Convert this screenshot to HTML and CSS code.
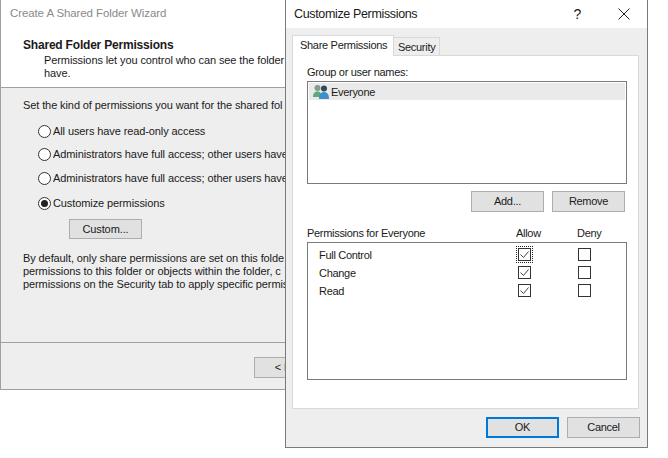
FILE: index.html
```html
<!doctype html>
<html>
<head>
  <title>Customize Permissions</title>
  <link rel="stylesheet" href="styles.css">
</head>
<body>
  <!-- Wizard window behind -->
  <div class="window wizard">
    <div class="wizard-head">
      <div class="wizard-title">Create A Shared Folder Wizard</div>
      <div class="wizard-heading">Shared Folder Permissions</div>
      <div class="wizard-sub">Permissions let you control who can see the folder<br>have.</div>
    </div>
    <div class="wizard-body">
      <p class="lead">Set the kind of permissions you want for the shared fol</p>
      <div class="radios">
        <label class="radio-row"><span class="radio"></span>All users have read-only access</label>
        <label class="radio-row"><span class="radio"></span>Administrators have full access; other users have</label>
        <label class="radio-row"><span class="radio"></span>Administrators have full access; other users have</label>
        <label class="radio-row"><span class="radio on"></span>Customize permissions</label>
      </div>
      <button class="btn custom-btn">Custom...</button>
      <p class="note">By default, only share permissions are set on this folde<br>permissions to this folder or objects within the folder, c<br>permissions on the Security tab to apply specific permis</p>
    </div>
    <div class="wizard-foot">
      <button class="btn back-btn">&lt; Back</button>
    </div>
  </div>

  <!-- Dialog in front -->
  <div class="window dialog">
    <div class="dialog-title">
      <span class="dialog-name">Customize Permissions</span>
      <span class="help">?</span>
      <svg class="close" width="12" height="12" viewBox="0 0 12 12"><path d="M.5.5l11 11M11.5.5l-11 11" stroke="#222" fill="none"/></svg>
    </div>
    <div class="dialog-body">
      <div class="tabs">
        <div class="tab active">Share Permissions</div>
        <div class="tab">Security</div>
      </div>
      <div class="panel">
        <div class="panel-label">Group or user names:</div>
        <div class="listbox">
          <div class="list-item">
            <svg class="users" width="16" height="16" viewBox="0 0 16 16">
              <circle cx="4.500" cy="4" r="3" fill="#7f9c8c"/>
              <path d="M0 13c0-4 2-5.500 4.500-5.500s4 1.500 4 5.500z" fill="#5fa877"/>
              <circle cx="11" cy="4.500" r="3" fill="#2f4a5c"/>
              <path d="M6 15c0-5 2-7 5-7s5 2 5 7z" fill="#3f8fce"/>
            </svg>
            <span class="list-text">Everyone</span>
          </div>
        </div>
        <div class="list-actions">
          <button class="btn">Add...</button>
          <button class="btn">Remove</button>
        </div>
        <div class="perm-head">
          <span class="perm-name">Permissions for Everyone</span>
          <span class="perm-col">Allow</span>
          <span class="perm-col">Deny</span>
        </div>
        <div class="perm-box">
          <div class="perm-row">
            <span class="perm-name">Full Control</span>
            <span class="perm-col"><span class="check on focus"><svg width="11" height="11" viewBox="0 0 11 11"><path d="M1.500 5.500l3 3 5-6" stroke="#444" fill="none"/></svg></span></span>
            <span class="perm-col"><span class="check"></span></span>
          </div>
          <div class="perm-row">
            <span class="perm-name">Change</span>
            <span class="perm-col"><span class="check on"><svg width="11" height="11" viewBox="0 0 11 11"><path d="M1.500 5.500l3 3 5-6" stroke="#444" fill="none"/></svg></span></span>
            <span class="perm-col"><span class="check"></span></span>
          </div>
          <div class="perm-row">
            <span class="perm-name">Read</span>
            <span class="perm-col"><span class="check on"><svg width="11" height="11" viewBox="0 0 11 11"><path d="M1.500 5.500l3 3 5-6" stroke="#444" fill="none"/></svg></span></span>
            <span class="perm-col"><span class="check"></span></span>
          </div>
        </div>
      </div>
      <div class="dialog-actions">
        <button class="btn default">OK</button>
        <button class="btn">Cancel</button>
      </div>
    </div>
  </div>
</body>
</html>
```
FILE: styles.css
```css
html, body {
  margin: 0;
  padding: 0;
}
body {
  position: relative;
  width: 668px;
  height: 458px;
  overflow: hidden;
  background-color: #fff;
  color: #1a1a1a;
  font-family: "Liberation Sans", Arial, sans-serif;
  font-size: 11px;
  line-height: 13px;
}
p {
  margin: 0;
}

.window {
  position: absolute;
  top: 0;
  box-sizing: border-box;
  border: 1px solid #8c8c8c;
  border-top: none;
  background-color: #eee;
}

.btn {
  box-sizing: border-box;
  width: 73px;
  height: 21px;
  padding: 0;
  border: 1px solid #adadad;
  border-radius: 0;
  background-color: #e1e1e1;
  color: #1a1a1a;
  font: inherit;
  letter-spacing: inherit;
}

/* wizard */
.wizard {
  left: 0;
  width: 286px;
  height: 390px;
  display: flex;
  flex-direction: column;
  overflow: hidden;
  border-color: #a0a0a0;
  white-space: nowrap;
  letter-spacing: -0.1px;
}
.wizard-head {
  flex: none;
  height: 88px;
  padding-left: 22px;
  box-sizing: border-box;
  border-bottom: 1px solid #a0a0a0;
  background-color: #fff;
}
.wizard-title {
  margin-left: -13px;
  padding-top: 7px;
  color: #8a8a8a;
  font-size: 11.5px;
}
.wizard-heading {
  margin-top: 19px;
  font-size: 12px;
  font-weight: bold;
  letter-spacing: -0.2px;
}
.wizard-sub {
  padding-left: 21px;
  margin-top: 2px;
}
.wizard-body {
  flex: none;
  height: 254px;
  box-sizing: border-box;
  padding: 11px 0 0 22px;
}
.radios {
  margin-top: 13px;
  padding-left: 15px;
  display: flex;
  flex-direction: column;
  gap: 11px;
}
.radio-row {
  display: flex;
  align-items: center;
  gap: 2px;
  height: 13px;
}
.radio-row:nth-child(2) {
  margin-top: -1px;
}
.radio-row:nth-child(4) {
  margin-top: 1px;
}
.radio {
  flex: none;
  box-sizing: border-box;
  width: 13px;
  height: 13px;
  border: 1px solid #333;
  border-radius: 50%;
  background-color: #fff;
  display: flex;
  align-items: center;
  justify-content: center;
}
.radio.on::after {
  content: "";
  width: 7px;
  height: 7px;
  border-radius: 50%;
  background-color: #222;
}
.custom-btn {
  display: block;
  height: 20px;
  margin: 9px 0 0 46px;
}
.note {
  margin-top: 13px;
}
.wizard-foot {
  flex: 1;
  border-top: 1px solid #a0a0a0;
  padding: 14px 0 0 253px;
}
.back-btn {
  padding-left: 2px;
}

/* dialog */
.dialog {
  left: 285px;
  width: 363px;
  height: 448px;
  border-color: #7a7a7a;
  letter-spacing: -0.3px;
}
.dialog-title {
  height: 28px;
  display: flex;
  align-items: center;
  background-color: #fff;
  padding: 0 17px 0 8px;
}
.dialog-name {
  flex: 1;
  font-size: 12.5px;
  letter-spacing: -0.35px;
}
.help {
  margin-right: 37px;
  font-size: 14px;
}
.dialog-body {
  padding: 7px 8px 0 6px;
}
.tabs {
  display: flex;
  align-items: flex-end;
  height: 20px;
  position: relative;
  z-index: 1;
  white-space: nowrap;
}
.tab {
  box-sizing: border-box;
  width: 46px;
  height: 18px;
  padding: 3px 0 0 4px;
  border: 1px solid #d9d9d9;
  border-bottom: none;
  border-left: none;
}
.tab.active {
  width: 102px;
  height: 21px;
  margin-bottom: -1px;
  padding: 3px 0 0 7px;
  background-color: #fff;
  border-left: 1px solid #d9d9d9;
}
.panel {
  box-sizing: border-box;
  width: 347px;
  height: 354px;
  padding: 10px 12px 0 14px;
  border: 1px solid #d9d9d9;
  background-color: #fff;
}
.panel-label {
  height: 15px;
}
.listbox {
  box-sizing: border-box;
  width: 320px;
  height: 103px;
  padding: 1px;
  border: 1px solid #7a7a7a;
}
.list-item {
  display: flex;
  align-items: center;
  gap: 2px;
  height: 17px;
  padding-left: 4px;
  background-color: #eaeaea;
}
.list-text {
  padding-top: 1px;
}
.list-actions {
  width: 318px;
  display: flex;
  justify-content: flex-end;
  gap: 8px;
  margin-top: 7px;
}
.perm-head {
  display: flex;
  width: 320px;
  height: 15px;
  margin-top: 15px;
}
.perm-head .perm-name {
  flex: none;
  width: 209px;
}
.perm-head .perm-col {
  flex: none;
  width: 61px;
}
.perm-box {
  box-sizing: border-box;
  width: 320px;
  height: 138px;
  padding: 3px 0 0 11px;
  border: 1px solid #7a7a7a;
}
.perm-row {
  display: flex;
  align-items: center;
  height: 18px;
}
.perm-row .perm-name {
  flex: none;
  width: 199px;
}
.perm-row .perm-col {
  flex: none;
  width: 60px;
  display: flex;
}
.check {
  box-sizing: border-box;
  width: 13px;
  height: 13px;
  margin-bottom: 1px;
  border: 1px solid #333;
  display: block;
  position: relative;
}
.check svg {
  display: block;
}
.check.focus {
  outline: 1px dotted #222;
  outline-offset: 1px;
}
.dialog-actions {
  display: flex;
  justify-content: flex-end;
  gap: 8px;
  width: 348px;
  margin-top: 8px;
}
.btn.default {
  border: 2px solid #0078d7;
}
```
